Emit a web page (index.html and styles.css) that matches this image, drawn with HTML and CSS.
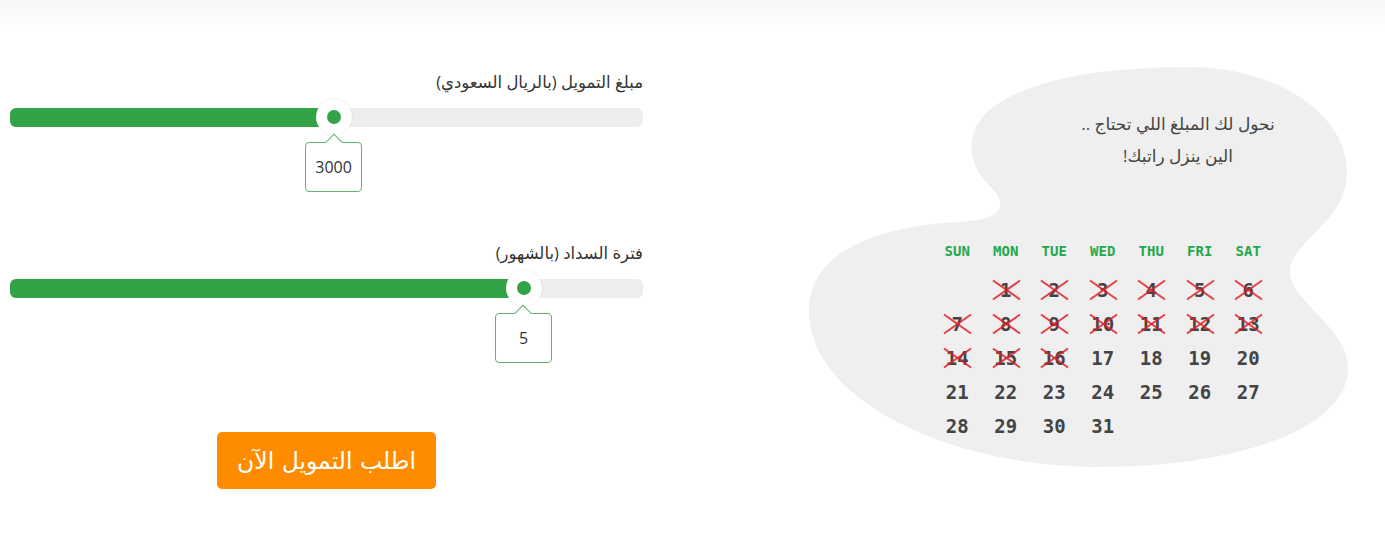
FILE: index.html
```html
<!DOCTYPE html>
<html lang="ar">
<head>
    <meta charset="UTF-8">
    <meta name="viewport" content="width=device-width, initial-scale=1.0">
    <link rel="stylesheet" href="styles.css">
    <title>التمويل</title>
</head>
<body>
    <div class="top-shade"></div>
    <main class="page">
        <section class="finance-form" dir="rtl">
            <div class="field">
                <div class="field-label">مبلغ التمويل (بالريال السعودي)</div>
                <div class="slider" style="--pos: 51.2%">
                    <div class="slider-fill"></div>
                    <div class="slider-thumb"></div>
                    <div class="slider-tip">3000</div>
                </div>
            </div>
            <div class="field">
                <div class="field-label">فترة السداد (بالشهور)</div>
                <div class="slider" style="--pos: 81.2%">
                    <div class="slider-fill"></div>
                    <div class="slider-thumb"></div>
                    <div class="slider-tip">5</div>
                </div>
            </div>
            <div class="actions">
                <button class="apply-btn">اطلب التمويل الآن</button>
            </div>
        </section>

        <section class="salary-card">
            <svg class="blob" viewBox="800 30 585 470" aria-hidden="true">
                <path d="M 1183 67
                         C 1270 65, 1345 110, 1347 170
                         C 1349 222, 1290 240, 1290 272
                         C 1290 302, 1350 328, 1348 370
                         C 1345 432, 1230 467, 1100 467
                         C 950 467, 808 400, 809 310
                         C 810 250, 880 226, 960 222
                         C 1012 219, 1004 200, 990 186
                         C 968 165, 962 132, 992 108
                         C 1035 76, 1110 68, 1183 67 Z" fill="#efefef"/>
            </svg>
            <p class="salary-text" dir="rtl">نحول لك المبلغ اللي تحتاج ..<br>الين ينزل راتبك!</p>
            <div class="calendar">
                <div class="day-name">SUN</div>
                <div class="day-name">MON</div>
                <div class="day-name">TUE</div>
                <div class="day-name">WED</div>
                <div class="day-name">THU</div>
                <div class="day-name">FRI</div>
                <div class="day-name">SAT</div>

                <div class="day"></div>
                <div class="day crossed">1</div>
                <div class="day crossed">2</div>
                <div class="day crossed">3</div>
                <div class="day crossed">4</div>
                <div class="day crossed">5</div>
                <div class="day crossed">6</div>

                <div class="day crossed">7</div>
                <div class="day crossed">8</div>
                <div class="day crossed">9</div>
                <div class="day crossed">10</div>
                <div class="day crossed">11</div>
                <div class="day crossed">12</div>
                <div class="day crossed">13</div>

                <div class="day crossed">14</div>
                <div class="day crossed">15</div>
                <div class="day crossed">16</div>
                <div class="day">17</div>
                <div class="day">18</div>
                <div class="day">19</div>
                <div class="day">20</div>

                <div class="day">21</div>
                <div class="day">22</div>
                <div class="day">23</div>
                <div class="day">24</div>
                <div class="day">25</div>
                <div class="day">26</div>
                <div class="day">27</div>

                <div class="day">28</div>
                <div class="day">29</div>
                <div class="day">30</div>
                <div class="day">31</div>
            </div>
        </section>
    </main>
</body>
</html>
```

FILE: styles.css
```css
body {
    margin: 0;
    font-family: "Open Sans", "DejaVu Sans", sans-serif;
    color: #333;
    background: #fff;
}

.top-shade {
    height: 30px;
    background: linear-gradient(to bottom, #f6f6f6, #fff);
}

.page {
    display: flex;
    align-items: flex-start;
}

/* left side: sliders + button */
.finance-form {
    width: 633px;
    margin-left: 10px;
    padding-top: 40px;
}

.field {
    margin-bottom: 114px;
}

.field-label {
    font-size: 16.5px;
    line-height: 24px;
    margin-bottom: 14px;
    text-align: right;
    color: #333;
}

.slider {
    position: relative;
    direction: ltr;
    height: 19px;
    background: #ededed;
    border-radius: 6px;
}

.slider-fill {
    width: var(--pos);
    height: 100%;
    background: #32a346;
    border-radius: 6px 0 0 6px;
}

.slider-thumb {
    position: absolute;
    top: -9px;
    left: calc(var(--pos) - 18px);
    width: 36px;
    height: 36px;
    border-radius: 50%;
    background: #fff;
    box-shadow: 0 0 2px rgba(0, 0, 0, 0.12);
}

.slider-thumb::after {
    content: "";
    position: absolute;
    top: 11px;
    left: 11px;
    width: 14px;
    height: 14px;
    border-radius: 50%;
    background: #32a346;
}

.slider-tip {
    position: absolute;
    top: 34px;
    left: calc(var(--pos) - 29px);
    width: 55px;
    height: 48px;
    border: 1.5px solid #5fb56d;
    border-radius: 4px;
    background: #fff;
    display: flex;
    align-items: center;
    justify-content: center;
    font-size: 16px;
    color: #333;
}

.slider-tip::before {
    content: "";
    position: absolute;
    top: -7px;
    left: 50%;
    width: 11px;
    height: 11px;
    margin-left: -6px;
    background: #fff;
    border-top: 1.5px solid #5fb56d;
    border-left: 1.5px solid #5fb56d;
    transform: rotate(45deg);
}

.actions {
    display: flex;
    justify-content: center;
    margin-top: 134px;
}

.apply-btn {
    width: 219px;
    height: 57px;
    border: none;
    border-radius: 5px;
    background: #ff8c00;
    color: #fff;
    font-family: "DejaVu Sans", sans-serif;
    font-size: 23.5px;
    cursor: pointer;
}

/* right side: blob + calendar */
.salary-card {
    position: relative;
    width: 585px;
    height: 470px;
    margin-left: 157px;
    padding-top: 78px;
    box-sizing: border-box;
}

.blob {
    position: absolute;
    top: 0;
    left: 0;
    width: 585px;
    height: 470px;
    z-index: 0;
}

.salary-text {
    position: relative;
    width: 300px;
    margin: 0 0 67px 228px;
    font-size: 17px;
    line-height: 32px;
    text-align: center;
    color: #444;
}

.calendar {
    position: relative;
    display: grid;
    grid-template-columns: repeat(7, 48.5px);
    grid-template-rows: 34px;
    grid-auto-rows: 34px;
    margin-left: 133px;
    font-family: "DejaVu Sans Mono", monospace;
    font-weight: bold;
    text-align: center;
}

.day-name {
    align-self: start;
    font-size: 14px;
    line-height: 24px;
    color: #22a84a;
}

.day {
    position: relative;
    font-size: 19px;
    line-height: 34px;
    color: #444;
}

.crossed::before,
.crossed::after {
    content: "";
    position: absolute;
    top: 16px;
    left: 8px;
    width: 33px;
    height: 2px;
    background: rgba(226, 30, 40, 0.85);
}

.crossed::before {
    transform: rotate(35deg);
}

.crossed::after {
    transform: rotate(-35deg);
}
```
